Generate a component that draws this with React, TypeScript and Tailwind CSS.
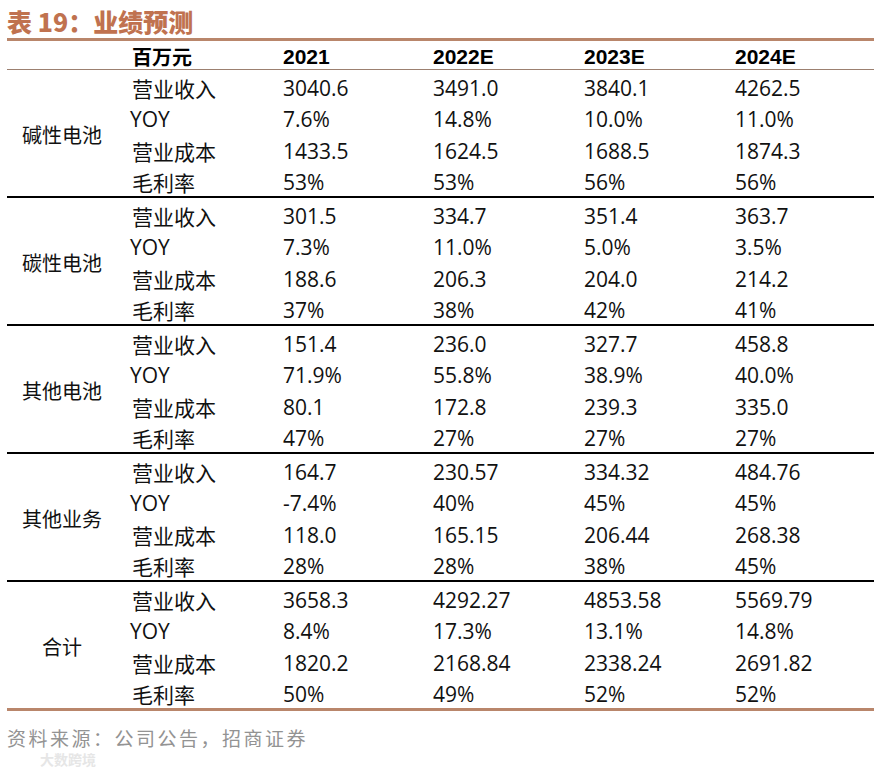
import React from "react";

type Group = {
  name: string;
  rows: [string, string, string, string, string][];
};

const YEARS = ["2021", "2022E", "2023E", "2024E"];

const GROUPS: Group[] = [
  {
    name: "碱性电池",
    rows: [
      ["营业收入", "3040.6", "3491.0", "3840.1", "4262.5"],
      ["YOY", "7.6%", "14.8%", "10.0%", "11.0%"],
      ["营业成本", "1433.5", "1624.5", "1688.5", "1874.3"],
      ["毛利率", "53%", "53%", "56%", "56%"],
    ],
  },
  {
    name: "碳性电池",
    rows: [
      ["营业收入", "301.5", "334.7", "351.4", "363.7"],
      ["YOY", "7.3%", "11.0%", "5.0%", "3.5%"],
      ["营业成本", "188.6", "206.3", "204.0", "214.2"],
      ["毛利率", "37%", "38%", "42%", "41%"],
    ],
  },
  {
    name: "其他电池",
    rows: [
      ["营业收入", "151.4", "236.0", "327.7", "458.8"],
      ["YOY", "71.9%", "55.8%", "38.9%", "40.0%"],
      ["营业成本", "80.1", "172.8", "239.3", "335.0"],
      ["毛利率", "47%", "27%", "27%", "27%"],
    ],
  },
  {
    name: "其他业务",
    rows: [
      ["营业收入", "164.7", "230.57", "334.32", "484.76"],
      ["YOY", "-7.4%", "40%", "45%", "45%"],
      ["营业成本", "118.0", "165.15", "206.44", "268.38"],
      ["毛利率", "28%", "28%", "38%", "45%"],
    ],
  },
  {
    name: "合计",
    rows: [
      ["营业收入", "3658.3", "4292.27", "4853.58", "5569.79"],
      ["YOY", "8.4%", "17.3%", "13.1%", "14.8%"],
      ["营业成本", "1820.2", "2168.84", "2338.24", "2691.82"],
      ["毛利率", "50%", "49%", "52%", "52%"],
    ],
  },
];

const COLS = "grid grid-cols-[123px_153px_150px_151px_151px_1fr]";
const CJK = "font-['Noto_Sans_CJK_SC',sans-serif]";
const NUM = "font-['Open_Sans','Noto_Sans_CJK_SC',sans-serif]";

function GroupBlock({ group, last }: { group: Group; last: boolean }) {
  return (
    <div
      className={`${COLS} ${
        last ? "border-b-[3px] border-[#b9866b]" : "border-b-2 border-black"
      }`}
    >
      <div
        className={`row-span-4 flex items-center justify-center pr-[13px] pt-[3px] text-[20px] text-[#111] ${CJK}`}
      >
        {group.name}
      </div>
      {group.rows.map((row) => (
        <React.Fragment key={row[0]}>
          {row.map((cell, i) => (
            <div
              key={i}
              className={`flex h-[31.5px] items-center pt-[5px] text-[21px] leading-none text-[#111] ${
                i === 0 && cell !== "YOY" ? `${CJK} pl-[2px]` : NUM
              }`}
            >
              {cell}
            </div>
          ))}
        </React.Fragment>
      ))}
    </div>
  );
}

export default function App() {
  return (
    <div className="relative h-[769px] w-[885px] overflow-hidden bg-white">
      <div className="ml-[7px] w-[867px] pt-[6px]">
        <h1
          className={`h-[32px] text-[25px] font-black leading-[30px] text-[#c0724f] ${CJK}`}
        >
          表 19：业绩预测
        </h1>
        <div className="border-t-[3px] border-[#b9866b]" />
        <div className={`${COLS} h-[29px] items-center border-b border-[#9c8070]`}>
          <div />
          <div className={`pl-[2px] text-[20px] font-bold text-black ${CJK}`}>
            百万元
          </div>
          {YEARS.map((y) => (
            <div
              key={y}
              className="font-['Liberation_Sans',Arial,sans-serif] text-[21px] font-bold text-black"
            >
              {y}
            </div>
          ))}
        </div>
        {GROUPS.map((g, i) => (
          <GroupBlock key={g.name} group={g} last={i === GROUPS.length - 1} />
        ))}
        <p
          className={`mt-[16px] text-[19px] leading-[22px] tracking-[2.5px] text-[#939393] ${CJK}`}
        >
          资料来源：公司公告，招商证券
        </p>
      </div>
      <div
        className={`absolute left-[40px] top-[752px] text-[14px] font-bold leading-[14px] text-[#e6e6e6] ${CJK}`}
      >
        大数跨境
      </div>
    </div>
  );
}
